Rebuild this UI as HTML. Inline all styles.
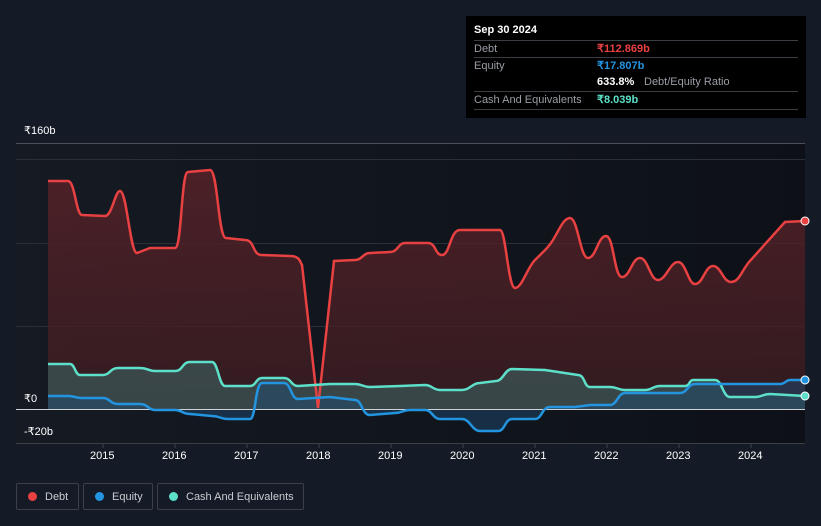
<!DOCTYPE html>
<html><head><meta charset="utf-8"><style>
body{margin:0;width:821px;height:526px;background:#151b26;font-family:"Liberation Sans",sans-serif;overflow:hidden;position:relative}
.t{position:absolute;font-size:11px;color:#fff}
.tip{position:absolute;left:466px;top:16px;width:340px;height:102px;background:#000}
.row{position:absolute;left:8px;width:324px;border-top:1px solid #3a3d44;font-size:11px;color:#9a9ea6;height:17px;line-height:17px}
.lg{position:absolute;top:483px;height:27px;border:1px solid #3a3f4a;border-radius:2px;color:#c8ccd2;font-size:11px;line-height:27px;box-sizing:border-box}
.dot{display:inline-block;width:9px;height:9px;border-radius:50%;margin:0 8px 0 11px;vertical-align:-1px}
</style></head><body>
<svg width="821" height="526" style="position:absolute;left:0;top:0">
<defs>
<linearGradient id="bg" x1="0" x2="1"><stop offset="0" stop-color="#151a23"/><stop offset="1" stop-color="#0d1117"/></linearGradient>
<linearGradient id="df" x1="0" y1="0" x2="0" y2="1"><stop offset="0" stop-color="#5a2228" stop-opacity=".8"/><stop offset="1" stop-color="#3a1d22" stop-opacity=".8"/></linearGradient>
</defs>
<rect x="16" y="143" width="789" height="300" fill="url(#bg)"/>
<line x1="16" y1="143.5" x2="805" y2="143.5" stroke="#4a4f58"/>
<line x1="16" y1="159.5" x2="805" y2="159.5" stroke="#2a2f38"/>
<line x1="16" y1="243.5" x2="805" y2="243.5" stroke="#2a2f38"/>
<line x1="16" y1="326.5" x2="805" y2="326.5" stroke="#2a2f38"/>
<line x1="16" y1="443.5" x2="805" y2="443.5" stroke="#3a3f48"/>
<path d="M48,181 L68,181 C75,181 76,215 82,215 L105,216 C112,216 115,191 120,191 C127,191 130,253 137,253 L150,248 L175,248 C182,248 181,172 188,172 L210,170 C218,170 218,238 226,238 L245,240 C255,240 252,255 262,255 L290,256 C300,256 300,262 302,265 L318,408 L334,261 L355,260 C362,260 363,253 370,253 L390,252 C398,252 398,243 405,243 L428,243 C436,243 435,255 442,255 C450,255 450,230 460,230 L500,230 C506,230 508,288 515,288 C522,288 527,268 535,260 C543,252 548,248 553,240 C560,228 564,218 570,218 C578,218 580,258 588,258 C596,258 598,236 606,236 C614,236 614,277 622,277 C630,277 632,258 640,258 C648,258 650,280 658,280 C666,280 670,262 678,262 C686,262 688,284 695,284 C703,284 705,266 713,266 C721,266 723,282 731,282 C739,282 741,272 749,262 L785,222 L805,221 L805,409 L48,409Z" fill="url(#df)"/>
<path d="M48,364 L70,364 C75,364 75,375 80,375 L103,375 C110,375 110,368 118,368 L140,368 C148,368 148,371 155,371 L175,371 C183,371 182,362 190,362 L212,362 C218,362 219,386 225,386 L250,386 C256,386 256,378 262,378 L284,378 C291,378 291,386 298,386 L330,384 L355,384 C362,384 363,387 370,387 L400,386 L425,385 C432,385 433,390 440,390 L462,390 C470,390 472,383 480,383 L496,381 C503,381 505,369 512,369 L545,370 L578,375 C585,375 584,387 590,387 L610,387 C617,387 618,390 625,390 L645,390 C652,390 653,386 660,386 L685,386 C690,386 689,380 693,380 L715,380 C722,380 723,397 730,397 L755,397 C762,397 763,394 770,394 L805,396 L805,409 L48,409Z" fill="#3e6a68" fill-opacity=".55"/>
<path d="M48,396 L68,396 C75,396 75,398 82,398 L103,398 C110,398 110,404 118,404 L140,404 C148,404 148,410 155,410 L175,410 C182,410 182,414 190,414 L212,416 C220,416 220,419 228,419 L250,419 C256,419 255,383 262,383 L284,383 C291,383 291,399 298,399 L330,397 L355,400 C362,400 362,415 370,415 L395,413 C402,413 403,410 410,410 L425,410 C432,410 433,419 440,419 L462,419 C470,419 472,431 480,431 L498,431 C505,431 505,419 512,419 L535,419 C542,419 542,407 550,407 L575,407 L590,405 L610,405 C617,405 618,393 625,393 L680,393 C687,393 688,384 695,384 L780,384 C785,384 786,380 790,380 L805,380 L805,409 L48,409Z" fill="#1e4a70" fill-opacity=".5"/>
<line x1="16" y1="409.5" x2="805" y2="409.5" stroke="#cfd3d8" stroke-width="1"/>
<path d="M48,181 L68,181 C75,181 76,215 82,215 L105,216 C112,216 115,191 120,191 C127,191 130,253 137,253 L150,248 L175,248 C182,248 181,172 188,172 L210,170 C218,170 218,238 226,238 L245,240 C255,240 252,255 262,255 L290,256 C300,256 300,262 302,265 L318,408 L334,261 L355,260 C362,260 363,253 370,253 L390,252 C398,252 398,243 405,243 L428,243 C436,243 435,255 442,255 C450,255 450,230 460,230 L500,230 C506,230 508,288 515,288 C522,288 527,268 535,260 C543,252 548,248 553,240 C560,228 564,218 570,218 C578,218 580,258 588,258 C596,258 598,236 606,236 C614,236 614,277 622,277 C630,277 632,258 640,258 C648,258 650,280 658,280 C666,280 670,262 678,262 C686,262 688,284 695,284 C703,284 705,266 713,266 C721,266 723,282 731,282 C739,282 741,272 749,262 L785,222 L805,221" fill="none" stroke="#e84142" stroke-width="2.5"/>
<path d="M48,364 L70,364 C75,364 75,375 80,375 L103,375 C110,375 110,368 118,368 L140,368 C148,368 148,371 155,371 L175,371 C183,371 182,362 190,362 L212,362 C218,362 219,386 225,386 L250,386 C256,386 256,378 262,378 L284,378 C291,378 291,386 298,386 L330,384 L355,384 C362,384 363,387 370,387 L400,386 L425,385 C432,385 433,390 440,390 L462,390 C470,390 472,383 480,383 L496,381 C503,381 505,369 512,369 L545,370 L578,375 C585,375 584,387 590,387 L610,387 C617,387 618,390 625,390 L645,390 C652,390 653,386 660,386 L685,386 C690,386 689,380 693,380 L715,380 C722,380 723,397 730,397 L755,397 C762,397 763,394 770,394 L805,396" fill="none" stroke="#5de0c9" stroke-width="2.5"/>
<path d="M48,396 L68,396 C75,396 75,398 82,398 L103,398 C110,398 110,404 118,404 L140,404 C148,404 148,410 155,410 L175,410 C182,410 182,414 190,414 L212,416 C220,416 220,419 228,419 L250,419 C256,419 255,383 262,383 L284,383 C291,383 291,399 298,399 L330,397 L355,400 C362,400 362,415 370,415 L395,413 C402,413 403,410 410,410 L425,410 C432,410 433,419 440,419 L462,419 C470,419 472,431 480,431 L498,431 C505,431 505,419 512,419 L535,419 C542,419 542,407 550,407 L575,407 L590,405 L610,405 C617,405 618,393 625,393 L680,393 C687,393 688,384 695,384 L780,384 C785,384 786,380 790,380 L805,380" fill="none" stroke="#2394df" stroke-width="2.5"/>
<circle cx="805" cy="221" r="4" fill="#e84142" stroke="#fff" stroke-width="1"/>
<circle cx="805" cy="380" r="4" fill="#2394df" stroke="#fff" stroke-width="1"/>
<circle cx="805" cy="396" r="4" fill="#5de0c9" stroke="#fff" stroke-width="1"/>
<g stroke="#3a3f48"><line x1="103" y1="443" x2="103" y2="448"/><line x1="175" y1="443" x2="175" y2="448"/><line x1="247" y1="443" x2="247" y2="448"/><line x1="319" y1="443" x2="319" y2="448"/><line x1="391" y1="443" x2="391" y2="448"/><line x1="463" y1="443" x2="463" y2="448"/><line x1="535" y1="443" x2="535" y2="448"/><line x1="607" y1="443" x2="607" y2="448"/><line x1="679" y1="443" x2="679" y2="448"/><line x1="751" y1="443" x2="751" y2="448"/></g>
</svg>
<div class="t" style="left:24px;top:124px">₹160b</div>
<div class="t" style="left:24px;top:392px">₹0</div>
<div class="t" style="left:24px;top:425px">-₹20b</div>
<div class="t" style="left:90px;top:450px">2015</div>
<div class="t" style="left:162px;top:450px">2016</div>
<div class="t" style="left:234px;top:450px">2017</div>
<div class="t" style="left:306px;top:450px">2018</div>
<div class="t" style="left:378px;top:450px">2019</div>
<div class="t" style="left:450px;top:450px">2020</div>
<div class="t" style="left:522px;top:450px">2021</div>
<div class="t" style="left:594px;top:450px">2022</div>
<div class="t" style="left:666px;top:450px">2023</div>
<div class="t" style="left:738px;top:450px">2024</div>
<div class="tip">
<div style="position:absolute;left:8px;top:8px;color:#fff;font-size:11px;font-weight:bold">Sep 30 2024</div>
<div class="row" style="top:24px">Debt<span style="position:absolute;left:123px;color:#e84142;font-weight:bold">₹112.869b</span></div>
<div class="row" style="top:41px">Equity<span style="position:absolute;left:123px;color:#2394df;font-weight:bold">₹17.807b</span></div>
<div class="row" style="top:58px;border-top:none"><span style="position:absolute;left:123px;color:#fff;font-weight:bold">633.8%</span><span style="position:absolute;left:170px;color:#9a9ea6">Debt/Equity Ratio</span></div>
<div class="row" style="top:75px">Cash And Equivalents<span style="position:absolute;left:123px;color:#5de0c9;font-weight:bold">₹8.039b</span></div>
<div class="row" style="top:93px;height:0"></div>
</div>
<div class="lg" style="left:16px;width:63px"><span class="dot" style="background:#e84142"></span>Debt</div>
<div class="lg" style="left:83px;width:70px"><span class="dot" style="background:#2394df"></span>Equity</div>
<div class="lg" style="left:157px;width:147px"><span class="dot" style="background:#5de0c9"></span>Cash And Equivalents</div>
</body></html>
